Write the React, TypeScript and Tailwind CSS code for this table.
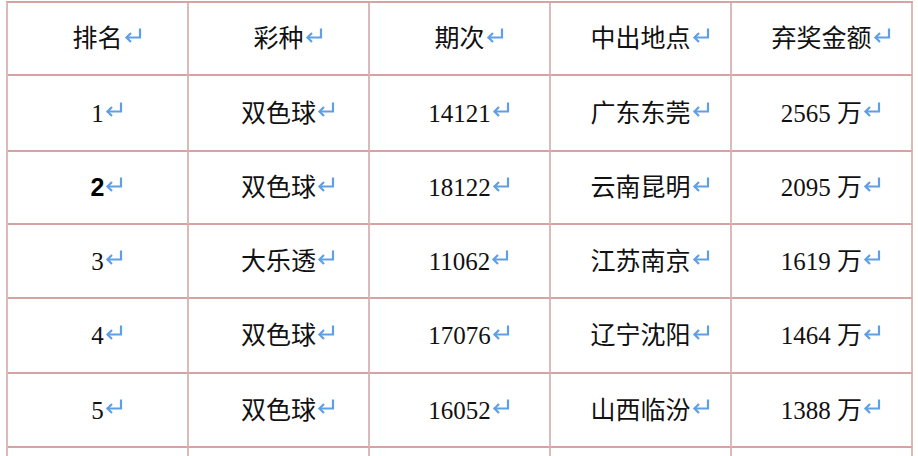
import React from "react";

const HEADERS = ["排名", "彩种", "期次", "中出地点", "弃奖金额"];

const ROWS = [
  { rank: "1", bold: false, kind: "双色球", issue: "14121", place: "广东东莞", amount: "2565 万", h: "h-[76px]" },
  { rank: "2", bold: true, kind: "双色球", issue: "18122", place: "云南昆明", amount: "2095 万", h: "h-[73px]" },
  { rank: "3", bold: false, kind: "大乐透", issue: "11062", place: "江苏南京", amount: "1619 万", h: "h-[74px]" },
  { rank: "4", bold: false, kind: "双色球", issue: "17076", place: "辽宁沈阳", amount: "1464 万", h: "h-[75px]" },
  { rank: "5", bold: false, kind: "双色球", issue: "16052", place: "山西临汾", amount: "1388 万", h: "h-[74px]" },
];

// Word paragraph mark, hangs after the centred text
function ReturnMark() {
  return (
    <svg
      className="absolute left-full top-[calc(50%-11px)] ml-[1px]"
      width="18"
      height="15"
      viewBox="0 0 18 15"
      fill="none"
      stroke="#5e9fe6"
      strokeWidth="2.2"
      strokeLinecap="square"
    >
      <path d="M16 1.5V9.5H3" />
      <path d="M7 5L2.5 9.5L7 14" strokeLinecap="butt" />
    </svg>
  );
}

function Cell({ children, bold = false }: { children: React.ReactNode; bold?: boolean }) {
  return (
    <div className="flex items-center justify-center border-r-2 border-b-2 border-r-[#dcbaba] border-b-[#d6a3a5]">
      <span
        className={
          bold
            ? "relative font-['Liberation_Sans'] font-bold text-[25px] leading-none text-black"
            : "relative text-[25px] leading-none text-[#111]"
        }
      >
        {children}
        {children !== "" && <ReturnMark />}
      </span>
    </div>
  );
}

export default function App() {
  return (
    <div className="h-[456px] w-[918px] overflow-hidden bg-white pt-px pl-[6px] font-['Liberation_Serif','Noto_Sans_CJK_SC',serif]">
      <div className="w-[907px] border-l-2 border-t-2 border-l-[#dcbaba] border-t-[#d6a3a5]">
        <div className="grid h-[73px] grid-cols-5">
          {HEADERS.map((h) => (
            <Cell key={h}>{h}</Cell>
          ))}
        </div>
        {ROWS.map((r) => (
          <div key={r.rank} className={`grid grid-cols-5 ${r.h}`}>
            <Cell bold={r.bold}>{r.rank}</Cell>
            <Cell>{r.kind}</Cell>
            <Cell>{r.issue}</Cell>
            <Cell>{r.place}</Cell>
            <Cell>{r.amount}</Cell>
          </div>
        ))}
        <div className="grid h-[74px] grid-cols-5">
          <Cell>{""}</Cell>
          <Cell>{""}</Cell>
          <Cell>{""}</Cell>
          <Cell>{""}</Cell>
          <Cell>{""}</Cell>
        </div>
      </div>
    </div>
  );
}
